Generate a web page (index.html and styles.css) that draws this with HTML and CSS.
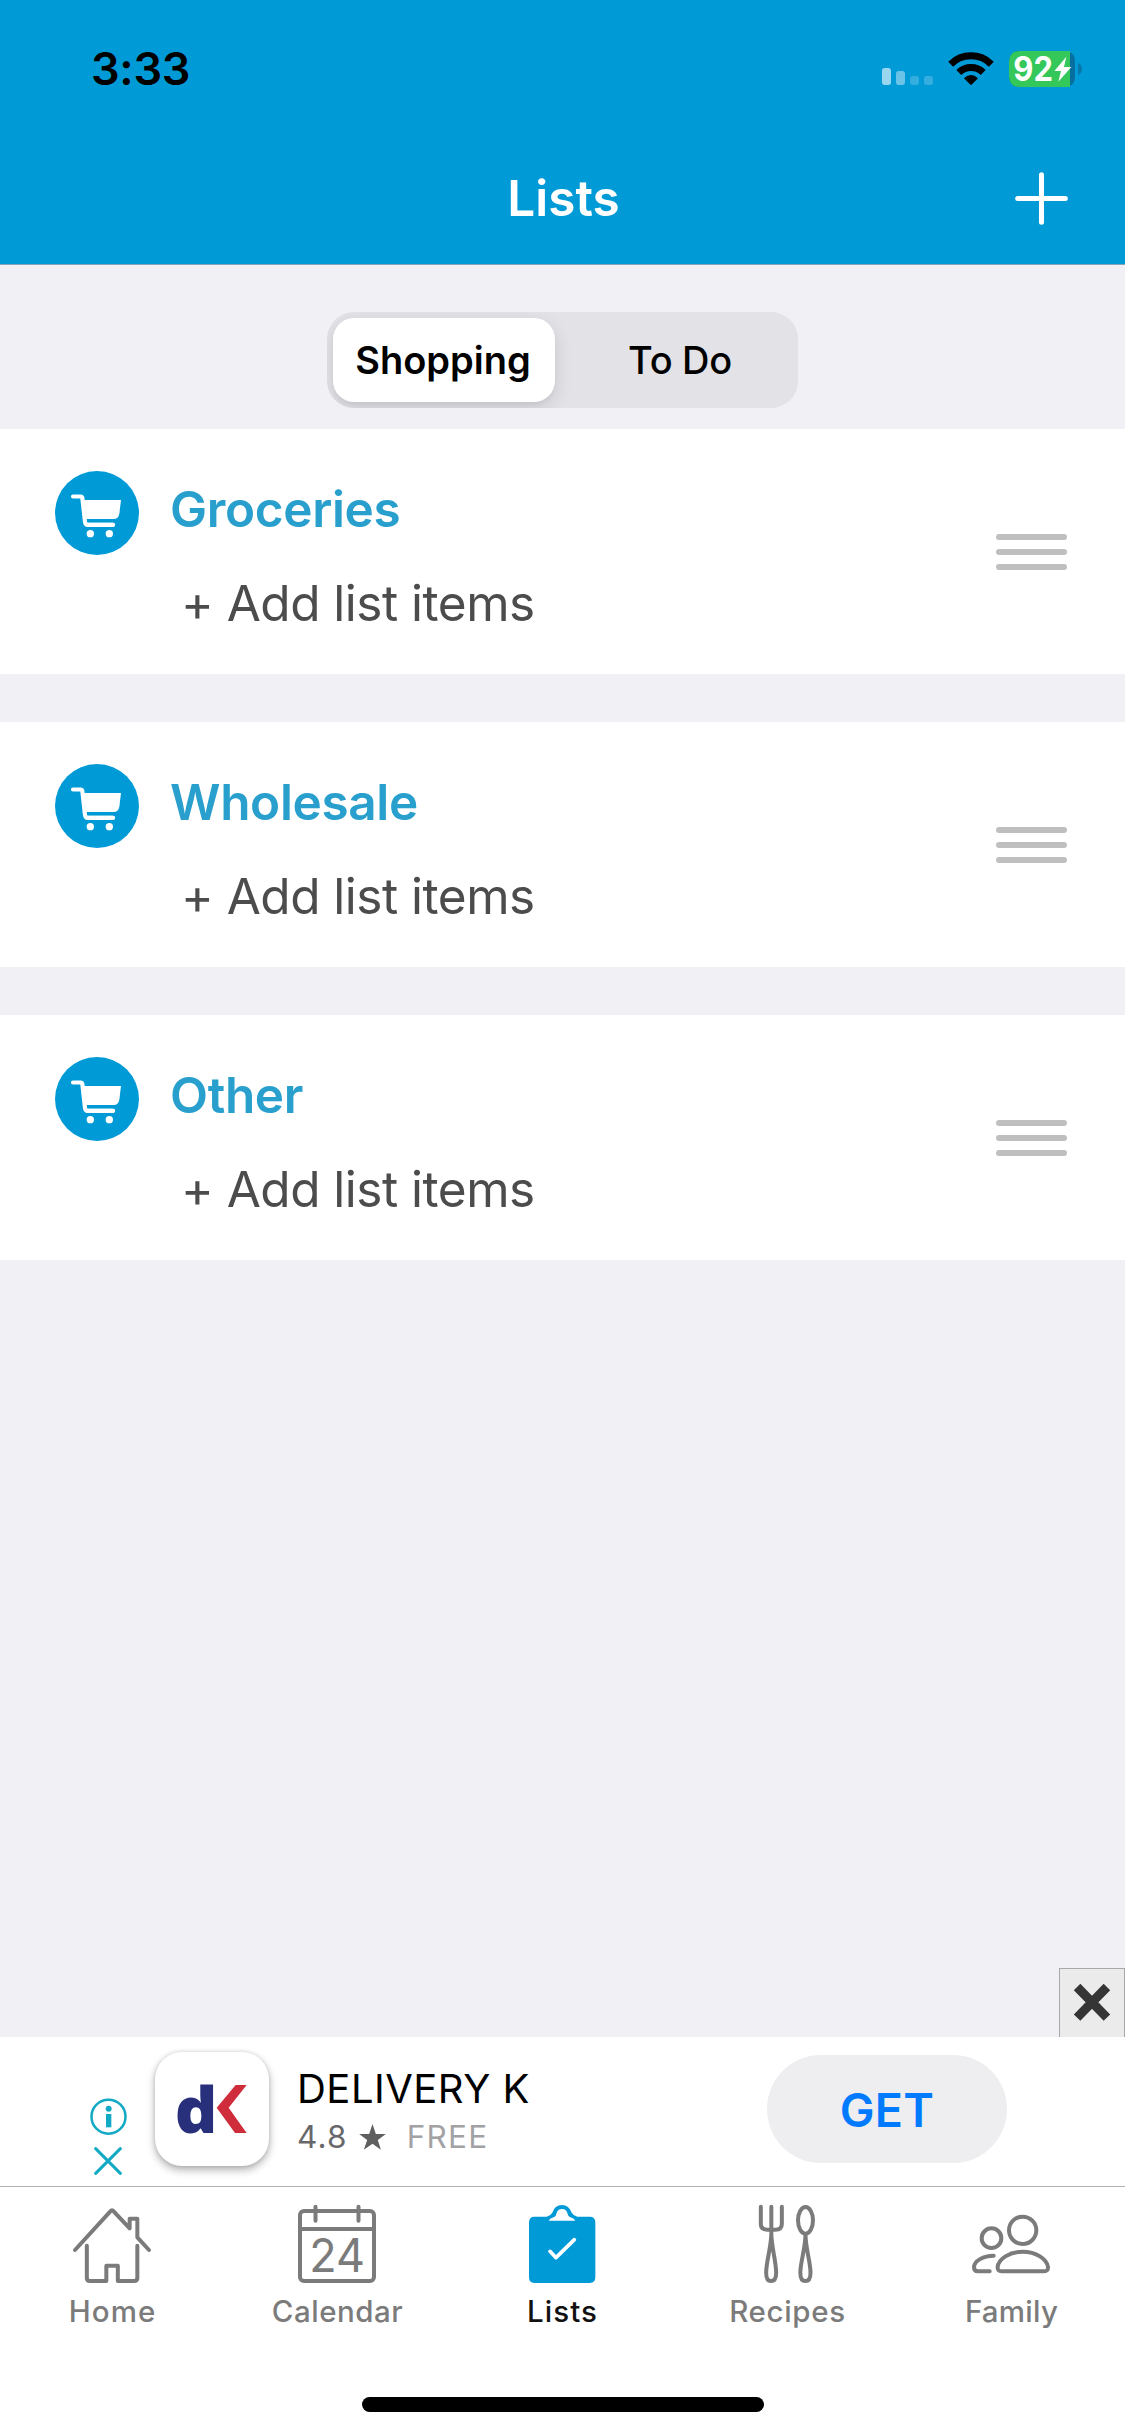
FILE: index.html
```html
<!DOCTYPE html>
<html lang="en">
<head>
<meta charset="utf-8">
<title>Lists</title>
<link rel="stylesheet" href="styles.css">
</head>
<body>
<svg class="defs" width="0" height="0">
  <symbol id="cart" viewBox="15 15 252 252">
    <circle cx="141" cy="141" r="126" fill="#009ad7"/>
    <path d="M69 91.500H92Q96 91.500 97 96L105 168Q106 176.500 114 176.500H189" fill="none" stroke="#fff" stroke-width="12.500" stroke-linecap="round" stroke-linejoin="round"/>
    <path d="M98 102H213L208 143Q205 159 191 159H108Z" fill="#fff"/>
    <path d="M112 163.500H190" stroke="#009ad7" stroke-width="8" fill="none"/>
    <path d="M189 176.500H112" stroke="#fff" stroke-width="12.500" stroke-linecap="round"/>
    <circle cx="121" cy="203" r="11" fill="#fff"/>
    <circle cx="178" cy="203" r="11" fill="#fff"/>
  </symbol>
</svg>
<div class="app">
  <header class="header">
    <div class="status">
      <span class="time">3:33</span>
      <svg class="status-icons" viewBox="120 84 612 120">
        <g fill="#fff">
          <rect x="126" y="144" width="27" height="51" rx="8" opacity=".6"/>
          <rect x="168" y="153" width="27" height="42" rx="8" opacity=".42"/>
          <rect x="210" y="168" width="27" height="27" rx="8" opacity=".2"/>
          <rect x="252" y="168" width="27" height="27" rx="8" opacity=".2"/>
        </g>
        <g fill="none" stroke="#000" stroke-width="21">
          <path d="M332 132.500A87 87 0 0 1 454 132.500"/>
          <path d="M356.500 157.500A52 52 0 0 1 429.500 157.500"/>
        </g>
        <path d="M372 175Q393 155 414 175L396 193Q393 196 390 193Z"/>
        <path d="M540 93H672Q705 93 705 126V168Q705 201 672 201H540Q507 201 507 168V126Q507 93 540 93Z" fill="#066fa0"/>
        <path d="M540 93H690V201H540Q507 201 507 168V126Q507 93 540 93Z" fill="#34c759"/>
        <path d="M714 129Q726 134 726 147Q726 160 714 165Z" fill="#0878ab"/>
        <text class="battery-level" x="520" y="184" textLength="119" lengthAdjust="spacingAndGlyphs">92</text>
        <path d="M679 110L643 153H663L655 185L694 141H672Z" fill="#fff"/>
      </svg>
    </div>
    <div class="nav">
      <h1 class="title">Lists</h1>
      <svg class="plus" viewBox="525 456 158 158"><path d="M533 535H675M604 464V606" stroke="#fff" stroke-width="15" stroke-linecap="round"/></svg>
    </div>
  </header>

  <main class="main">
    <div class="segments">
      <span class="segment active">Shopping</span>
      <span class="segment">To Do</span>
    </div>
    <ul class="lists">
      <li class="list">
        <svg class="cart"><use href="#cart"/></svg>
        <div class="list-text"><h2 class="name">Groceries</h2><p class="add">+ Add list items</p></div>
        <div class="handle"><i></i><i></i><i></i></div>
      </li>
      <li class="list">
        <svg class="cart"><use href="#cart"/></svg>
        <div class="list-text"><h2 class="name">Wholesale</h2><p class="add">+ Add list items</p></div>
        <div class="handle"><i></i><i></i><i></i></div>
      </li>
      <li class="list">
        <svg class="cart"><use href="#cart"/></svg>
        <div class="list-text"><h2 class="name">Other</h2><p class="add">+ Add list items</p></div>
        <div class="handle"><i></i><i></i><i></i></div>
      </li>
    </ul>
    <div class="close"><svg viewBox="1000 130 112 112"><path d="M1012 142L1100 232M1100 142L1012 232" stroke="#353535" stroke-width="27"/></svg></div>
  </main>

  <section class="ad">
    <div class="ad-controls">
      <svg class="ad-info" viewBox="30 173 111 111"><circle cx="85.500" cy="229" r="51" fill="none" stroke="#12a9c5" stroke-width="7.500"/><circle cx="86" cy="205" r="9" fill="#12a9c5"/><rect x="78" y="221" width="16" height="40" fill="#12a9c5"/></svg>
      <svg class="ad-x" viewBox="43 322 84 84"><path d="M48 327L122 401M122 327L48 401" stroke="#12a9c5" stroke-width="9" stroke-linecap="round"/></svg>
    </div>
    <div class="ad-logo">
      <svg viewBox="225 36 342 342"><text class="logo-d" x="284" y="279" textLength="128" lengthAdjust="spacingAndGlyphs">d</text><path d="M467 135H500L446 203L500 279H465L410 203Z" fill="#cf2d3b"/></svg>
    </div>
    <div class="ad-text">
      <div class="ad-title">DELIVERY K</div>
      <div class="ad-meta">
        <span>4.8</span>
        <svg class="star" viewBox="898 552 80 78"><path d="M938 552L948 582H978L954 600L963 629L938 611L912 629L922 600L898 582H928Z" fill="#5f5f5f"/></svg>
        <span class="free">FREE</span>
      </div>
    </div>
    <div class="get">GET</div>
  </section>

  <nav class="tabs">
    <div class="tab tab-home">
      <svg viewBox="123 69 252 252">
        <path d="M135 210L241 94Q246 88 251 94L299 145V116H322V172L357 210M170.500 197V294Q170.500 303 180 303H229V257H263.500V303H312Q322 303 322 294V197"/>
      </svg>
      <span>Home</span>
    </div>
    <div class="tab tab-calendar">
      <svg viewBox="798 69 252 252">
        <rect x="810" y="93" width="222" height="210" rx="12"/>
        <path d="M810 147H1032M856.500 80V122M985.500 80V122"/>
        <text class="date" x="838" y="276" textLength="167" lengthAdjust="spacingAndGlyphs">24</text>
      </svg>
      <span>Calendar</span>
    </div>
    <div class="tab tab-lists active">
      <svg viewBox="123 69 252 252">
        <path class="board" d="M163 110H200Q212 107 217 98Q224 75 246 75Q267 75 275 98Q280 107 292 110H329Q346 110 346 127V292Q346 309 329 309H163Q147 309 147 292V127Q147 110 163 110Z"/>
        <path class="clip" d="M206 122Q210 114 221 112Q228 110 229 102Q232 87 246 87Q260 87 263 102Q264 110 271 112Q282 114 286 122Z"/>
        <path class="check" d="M210 214L228 233L283 179"/>
      </svg>
      <span>Lists</span>
    </div>
    <div class="tab tab-recipes">
      <svg viewBox="798 69 252 252">
        <path d="M842.500 80V132Q842.500 149 862 149H886Q905.500 149 905.500 132V80M874 80V165M874 160C874 200 858.500 245 858.500 278Q858.500 303 873 303Q888.500 303 888.500 278C888.500 245 874 200 874 160"/>
        <ellipse cx="976.500" cy="121" rx="22.500" ry="40"/>
        <path d="M976.500 163C976.500 205 961 245 961 278Q961 303 976 303Q991.500 303 991.500 278C991.500 245 976.500 205 976.500 163"/>
      </svg>
      <span>Recipes</span>
    </div>
    <div class="tab tab-family">
      <svg viewBox="213 69 252 252">
        <circle cx="368" cy="151" r="41"/>
        <circle cx="274.500" cy="174.500" r="29.500"/>
        <path d="M305 274Q292 274 293 261C295 237 328 215 368 215C408 215 441 237 444 261Q445 274 432 274ZM281 227C250 227 222 243 222 262Q222 274 234 274H269"/>
      </svg>
      <span>Family</span>
    </div>
  </nav>
  <div class="home-indicator"></div>
</div>
</body>
</html>
```
FILE: styles.css
```css
* { box-sizing: border-box; margin: 0; padding: 0; }
body { font-family: Inter, "Liberation Sans", sans-serif; background: #fff; }
svg { display: block; }
.defs { position: absolute; }
.app { width: 1125px; height: 2436px; display: flex; flex-direction: column; overflow: hidden; }

.header { height: 265px; background: #009ad7; border-bottom: 1px solid #85a4b8; flex: none; }
.status { height: 132px; padding: 48px 41px 0 91px; display: flex; justify-content: space-between; align-items: flex-start; }
.time { font-size: 45px; font-weight: 600; line-height: 41px; letter-spacing: -.3px; }
.status-icons { width: 204px; height: 40px; }
.battery-level { font-size: 101px; font-weight: 700; fill: #fff; }
.nav { height: 132px; padding: 0 57px; display: grid; grid-template-columns: 1fr auto 1fr; align-items: center; }
.title { grid-column: 2; color: #fff; font-size: 49.5px; font-weight: 600; line-height: 60px; padding-left: 2px; }
.plus { width: 53px; height: 53px; justify-self: end; }

.main { flex: 1; display: flex; flex-direction: column; background: #f1f0f5; padding-top: 47px; }
.segments { width: 471px; height: 96px; margin: 0 auto 21px; flex: none; border-radius: 27px; background: #e3e2e7; padding: 6px 0 6px 6px; display: flex; gap: 9px; overflow: hidden; }
.segment { flex: 1; font-size: 38px; font-weight: 450; line-height: 84px; letter-spacing: -.3px; text-align: center; padding-right: 2px; }
.segment.active { flex: none; width: 222px; background: #fff; border-radius: 21px; font-weight: 600; letter-spacing: 0; box-shadow: 0 6px 18px rgba(0, 0, 0, .12), 0 3px 3px rgba(0, 0, 0, .03); }

.lists { list-style: none; display: flex; flex-direction: column; gap: 48px; }
.list { height: 245px; background: #fff; padding: 0 58px 0 55px; display: flex; }
.cart { width: 84px; height: 84px; margin-top: 42px; }
.list-text { flex: 1; padding: 42px 0 0 31px; }
.name { color: #289fcc; font-size: 49.5px; font-weight: 600; line-height: 77px; letter-spacing: -.35px; }
.add { color: #4c4c4c; font-size: 49.5px; line-height: 111px; letter-spacing: -.5px; padding-left: 11px; }
.handle { width: 71px; display: flex; flex-direction: column; justify-content: center; gap: 9px; padding-top: 1px; }
.handle i { height: 6px; border-radius: 3px; background: #bfbfbf; }
.close { width: 66px; height: 69px; margin: auto 0 0 auto; border: 1.500px solid #a8a8ab; border-bottom: 0; background: #ebebeb; padding: 14px 0 0 13px; }
.close svg { width: 38px; height: 38px; }

.ad { height: 149px; flex: none; display: flex; padding-left: 90px; }
.ad-controls { width: 37px; padding-top: 61px; }
.ad-info { width: 37px; height: 37px; }
.ad-x { width: 28px; height: 28px; margin: 12px 0 0 4px; }
.ad-logo { width: 114px; height: 114px; margin: 15px 0 0 28px; border-radius: 27px; background: #fff; box-shadow: 0 4px 9px rgba(0, 0, 0, .3), 0 0 4px rgba(0, 0, 0, .12); }
.logo-d { font: 800 192px "Open Sans", sans-serif; fill: #28307c; }
.ad-text { flex: 1; padding: 27px 0 0 28px; }
.ad-title { font-size: 40px; line-height: 49px; letter-spacing: .49px; }
.ad-meta { display: flex; align-items: center; font-size: 31.5px; line-height: 47px; letter-spacing: 1.2px; color: #68686a; }
.star { width: 27px; height: 26px; margin: 0 21px 0 11px; }
.free { color: #a2a2a5; }
.get { width: 240px; height: 108px; margin: 18px 118px 0 0; border-radius: 54px; background: #eeeef0; color: #007aff; font-size: 46.5px; font-weight: 600; line-height: 110px; letter-spacing: .26px; text-align: center; }

.tabs { height: 211px; flex: none; border-top: 1px solid #b0b0b0; display: grid; grid-template-columns: repeat(5, 1fr); padding-top: 16px; }
.tab { display: flex; flex-direction: column; align-items: center; color: #7b7b7b; font-size: 29.5px; font-weight: 500; line-height: 48px; letter-spacing: .8px; }
.tab svg { width: 84px; height: 84px; fill: none; stroke: currentColor; stroke-width: 12; stroke-linecap: round; stroke-linejoin: round; }
.tab.active { color: #111; }
.tab-home { letter-spacing: 1.1px; }
.tab-calendar { letter-spacing: .52px; }
.tab-lists { letter-spacing: 1.05px; }
.tab-recipes { letter-spacing: .66px; }
.tab-family { letter-spacing: .25px; }
.tab-family span { padding-right: 2px; }
.tab .date { font-size: 140px; font-weight: 400; letter-spacing: 0; fill: currentColor; stroke: none; }
.tab .board { fill: #009ad7; stroke: none; }
.tab .clip { fill: #fff; stroke: none; }
.tab .check { stroke: #fff; stroke-width: 11; }
.home-indicator { width: 402px; height: 15px; flex: none; margin: 0 auto 24px; border-radius: 8px; background: #000; }
```
